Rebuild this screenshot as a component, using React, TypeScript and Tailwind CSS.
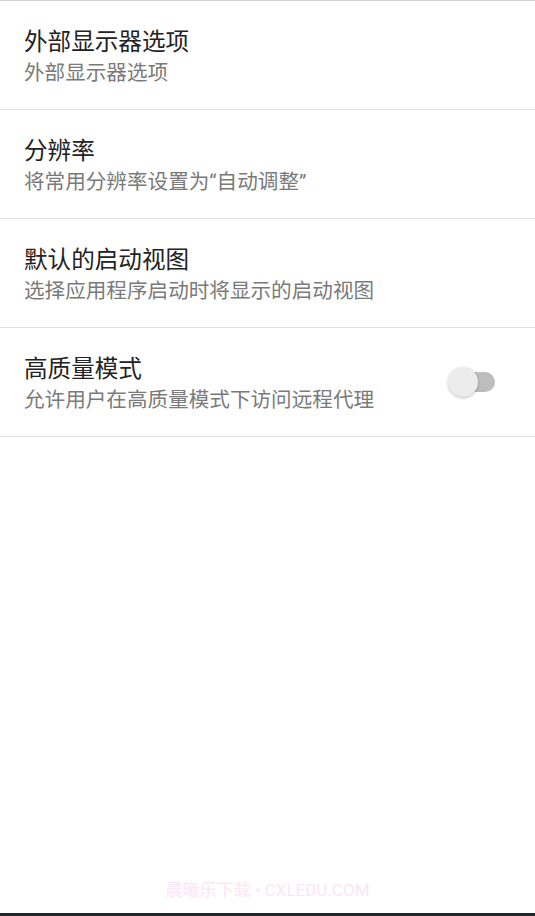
import React, { useState } from 'react';

interface SettingItem {
  title: string;
  subtitle: string;
  toggle?: boolean;
}

const items: SettingItem[] = [
  { title: '外部显示器选项', subtitle: '外部显示器选项' },
  { title: '分辨率', subtitle: '将常用分辨率设置为“自动调整”' },
  { title: '默认的启动视图', subtitle: '选择应用程序启动时将显示的启动视图' },
  { title: '高质量模式', subtitle: '允许用户在高质量模式下访问远程代理', toggle: true },
];

const font = { fontFamily: '"Roboto", "Noto Sans CJK SC", sans-serif' };

const App: React.FC = () => {
  const [hq, setHq] = useState(false);

  return (
    <div className="w-[535px] h-[916px] bg-white flex flex-col border-t border-[#cfcfcf]" style={font}>
      {items.map((item) => (
        <div
          key={item.title}
          className="h-[109px] flex items-center justify-between pl-6 pr-10 pt-[3px] border-b border-[#dedede]"
        >
          <div className="flex flex-col">
            <span className="text-[23.6px] leading-[30px] text-[#222]">{item.title}</span>
            <span className="text-[20.6px] leading-[28px] text-[#7a7a7a] mt-[2px]">{item.subtitle}</span>
          </div>
          {item.toggle && (
            <button onClick={() => setHq(!hq)} className="relative w-[47px] h-[30px] flex items-center -mt-[3px]">
              <span className={`absolute left-[3px] right-0 h-[20px] rounded-full ${hq ? 'bg-[#8fb8e8]' : 'bg-[#bdbdbd]'}`} />
              <span
                className={`absolute top-0 w-[30px] h-[30px] rounded-full shadow-[0_1px_3px_rgba(0,0,0,0.25)] ${
                  hq ? 'right-0 bg-[#2f7de1]' : 'left-0 bg-[#ececec]'
                }`}
              />
            </button>
          )}
        </div>
      ))}
      <div className="flex-1 flex items-end justify-center pb-[10px]">
        <span className="text-[17px] text-[#fbe6f6]">晨曦乐下载 • CXLEDU.COM</span>
      </div>
      <div className="h-[3px] bg-[#232628]" />
    </div>
  );
};

export default App;
